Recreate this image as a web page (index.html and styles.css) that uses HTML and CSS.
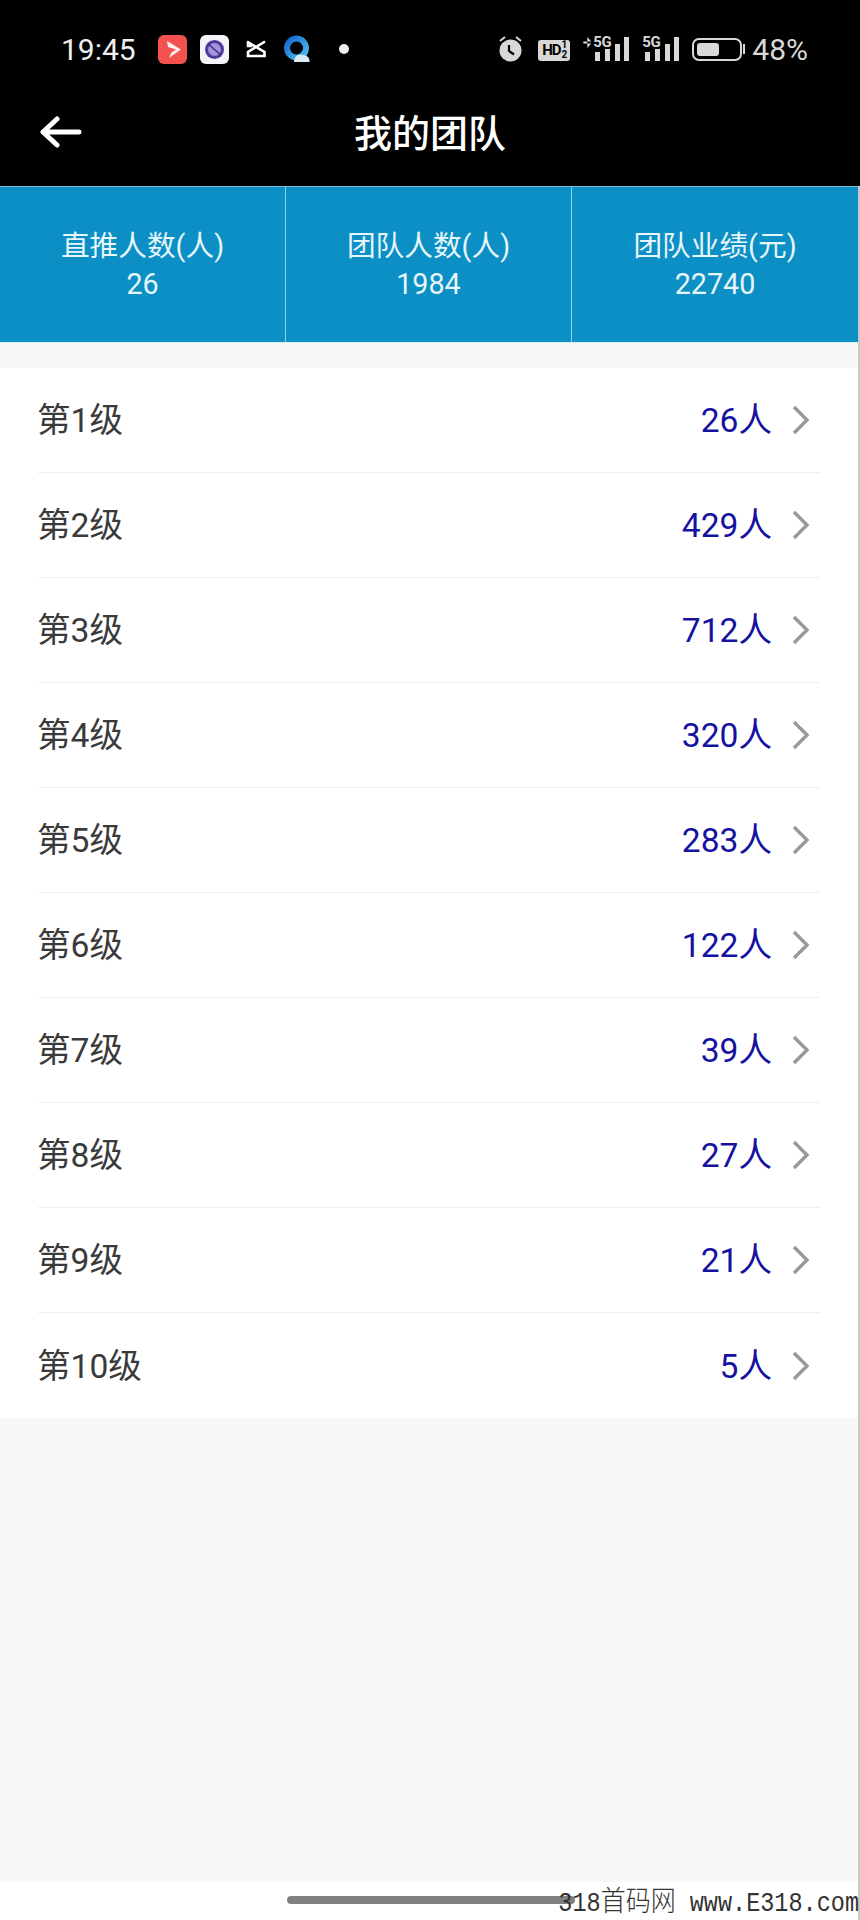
FILE: index.html
```html
<!DOCTYPE html>
<html lang="zh">

<head>
    <meta charset="UTF-8">
    <meta name="viewport" content="width=device-width, initial-scale=1.0">
    <title>我的团队</title>
    <link rel="stylesheet" href="styles.css">
</head>

<body>

    <div class="page">
        <header class="top">
            <div class="status-bar">
                <span class="time">19:45</span>
                <div class="app-icons">
                    <svg width="29" height="29" viewBox="0 0 29 29">
                        <rect width="29" height="29" rx="6" fill="#f4524f" />
                        <path d="M9 6 L23 14.5 L11 23 L13.5 17.5 L18 14.5 L10 12 Z" fill="#fff" opacity="0.9" />
                    </svg>
                    <svg width="29" height="29" viewBox="0 0 29 29">
                        <rect width="29" height="29" rx="6" fill="#f4f3f8" />
                        <circle cx="14.5" cy="14.5" r="9.5" fill="#4b3a9a" />
                        <circle cx="14.5" cy="14.5" r="6.5" fill="#a493dc" />
                        <path d="M8 9 L21 20" stroke="#3d2f86" stroke-width="1.6" />
                    </svg>
                    <svg class="app-capcut" width="20" height="18" viewBox="0 0 20 18">
                        <path d="M1 1.5 L18.5 12 V16 H2 V12 L19 1.5 M2 1.5 V6 L6 6" fill="none" stroke="#fff" stroke-width="2.6" />
                    </svg>
                    <svg class="app-cloud" width="26" height="28" viewBox="0 0 26 28">
                        <defs>
                            <linearGradient id="ringBlue" x1="0" y1="0" x2="1" y2="1">
                                <stop offset="0" stop-color="#1668d0" />
                                <stop offset="1" stop-color="#4cc0ee" />
                            </linearGradient>
                        </defs>
                        <circle cx="12.5" cy="13" r="9.5" fill="none" stroke="url(#ringBlue)" stroke-width="6" />
                        <path d="M10 27 C10 21 15 18 19 20 C23 20 26 23 25.5 27 Z" fill="#dcebf4" />
                    </svg>
                    <span class="dot"></span>
                </div>
                <div class="sys-icons">
                    <svg width="25" height="26" viewBox="0 0 25 26">
                        <path d="M2 5 L7 1 M23 5 L18 1" stroke="#d8d8d8" stroke-width="2" fill="none" />
                        <circle cx="12.5" cy="14.5" r="11" fill="#d8d8d8" />
                        <path d="M11 9 V15 L16 18.5" stroke="#000" stroke-width="2.2" fill="none" />
                    </svg>
                    <span class="hd">HD<span class="hd-sub"><i>1</i><i>2</i></span></span>
                    <div class="signal signal-first">
                        <span class="updown"></span>
                        <span class="net">5G</span>
                        <svg width="34" height="24" viewBox="0 0 34 24">
                            <path d="M0 15 H5 V24 H0 Z M10 12 H15 V24 H10 Z M20 7 H25 V24 H20 Z M29 0 H34 V24 H29 Z" fill="#d8d8d8" />
                        </svg>
                    </div>
                    <div class="signal">
                        <span class="net">5G</span>
                        <svg width="34" height="24" viewBox="0 0 34 24">
                            <path d="M0 15 H5 V24 H0 Z M10 12 H15 V24 H10 Z M20 7 H25 V24 H20 Z M29 0 H34 V24 H29 Z" fill="#d8d8d8" />
                        </svg>
                    </div>
                    <div class="battery">
                        <div class="battery-body"><div class="battery-level"></div></div>
                        <div class="battery-cap"></div>
                    </div>
                    <span class="percent">48%</span>
                </div>
            </div>
            <div class="nav-bar">
                <svg class="back" width="42" height="32" viewBox="0 0 42 32">
                    <path d="M3 16 H39 M17 3 L3 16 L17 29" fill="none" stroke="#fff" stroke-width="5" stroke-linecap="round" stroke-linejoin="round" />
                </svg>
                <h1>我的团队</h1>
            </div>
        </header>

        <main class="content">
            <section class="stats">
                <div class="stat">
                    <span>直推人数(人)</span>
                    <span>26</span>
                </div>
                <div class="stat">
                    <span>团队人数(人)</span>
                    <span>1984</span>
                </div>
                <div class="stat">
                    <span>团队业绩(元)</span>
                    <span>22740</span>
                </div>
            </section>

            <ul class="levels" id="levels"></ul>

            <div class="spacer"></div>

            <div class="home-bar">
                <div class="home-pill"></div>
            </div>
        </main>

        <div class="watermark">318<span class="watermark-cjk">首码网</span> www.E318.com</div>
    </div>

    <script>
        const counts = [26, 429, 712, 320, 283, 122, 39, 27, 21, 5];
        const list = document.getElementById('levels');

        counts.forEach((count, i) => {
            const li = document.createElement('li');
            li.className = 'level';
            li.innerHTML = '<span class="level-name">第' + (i + 1) + '级</span>' +
                '<span class="level-count">' + count + '人</span>' +
                '<svg class="chevron" width="20" height="32" viewBox="0 0 20 32">' +
                '<path d="M3 3 L16 16 L3 29" fill="none" stroke="#999" stroke-width="3.4" /></svg>';
            list.appendChild(li);
        });
    </script>
</body>

</html>
```

FILE: styles.css
```css
* {
    box-sizing: border-box;
}

body {
    margin: 0;
    font-family: Roboto, "Noto Sans CJK SC", sans-serif;
    background-color: #f8f8f8;
    color: #333;
}

.page {
    position: relative;
    display: flex;
    flex-direction: column;
    width: 860px;
    height: 1920px;
    overflow: hidden;
}

.top {
    height: 186px;
    background-color: #000;
    color: #fff;
}

.status-bar {
    display: flex;
    align-items: center;
    height: 98px;
    padding: 0 52px 0 61px;
}

.time {
    width: 97px;
    font-size: 30px;
    color: #eee;
}

.app-icons {
    display: flex;
    align-items: center;
    gap: 13px;
}

.app-capcut {
    margin-left: 4px;
}

.app-cloud {
    margin-left: 5px;
}

.dot {
    width: 10px;
    height: 10px;
    margin-left: 16px;
    border-radius: 50%;
    background-color: #eee;
}

.sys-icons {
    display: flex;
    align-items: center;
    margin-left: auto;
    gap: 13px;
    color: #d8d8d8;
}

.hd {
    display: flex;
    align-items: center;
    justify-content: center;
    width: 32px;
    height: 21px;
    margin: 2px 0 0 2px;
    border-radius: 3px;
    background-color: #d8d8d8;
    color: #000;
    font-size: 15px;
    font-weight: 700;
    letter-spacing: -1px;
}

.hd-sub {
    display: flex;
    flex-direction: column;
    font-size: 10px;
    line-height: 10px;
    margin-left: 1px;
}

.hd-sub i {
    font-style: normal;
}

.signal {
    position: relative;
    display: flex;
    justify-content: flex-end;
    width: 37px;
    height: 24px;
}

.signal-first {
    width: 46px;
}

.signal .net {
    position: absolute;
    top: -1px;
    left: 0;
    font-size: 15px;
    font-weight: 700;
    letter-spacing: -0.5px;
    line-height: 13px;
}

.signal .updown + .net {
    left: 10px;
}

.signal .updown {
    position: absolute;
    top: 0;
    left: 0;
    width: 8px;
    height: 11px;
    background-color: #d8d8d8;
    clip-path: polygon(50% 0, 100% 42%, 0 42%, 0 58%, 100% 58%, 50% 100%);
}

.battery {
    display: flex;
    align-items: center;
}

.battery-body {
    width: 50px;
    height: 23px;
    padding: 3px;
    border: 2px solid #d8d8d8;
    border-radius: 7px;
}

.battery-level {
    width: 22px;
    height: 100%;
    border-radius: 3px;
    background-color: #d8d8d8;
}

.battery-cap {
    width: 2px;
    height: 10px;
    margin-left: 1px;
    background-color: #d8d8d8;
}

.percent {
    margin-left: -6px;
    font-size: 30px;
}

.nav-bar {
    display: grid;
    grid-template-columns: 1fr auto 1fr;
    align-items: center;
    height: 88px;
    padding-bottom: 24px;
}

.nav-bar h1 {
    margin: 0;
    font-size: 38px;
    font-weight: 500;
    color: #fff;
}

.back {
    margin: 4px 0 0 40px;
}

.content {
    display: flex;
    flex-direction: column;
    flex: 1;
    border-right: 2px solid #c9c9c9;
}

.stats {
    display: flex;
    height: 157px;
    background-color: #0b8fc4;
    border-top: 1px solid #7cbcd6;
    border-bottom: 1px solid #d8f0fa;
    color: #e6f6fb;
}

.stat {
    display: flex;
    flex-direction: column;
    align-items: center;
    width: 286px;
    padding-top: 40px;
    border-right: 1px solid #93d0e8;
    font-size: 28.7px;
    line-height: 38px;
}

.stat:last-child {
    width: auto;
    flex: 1;
    border-right: none;
}

.levels {
    margin: 25px 0 0;
    padding: 0;
    list-style: none;
    background-color: #fff;
}

.level {
    display: flex;
    align-items: center;
    height: 105px;
    margin: 0 38px;
    border-bottom: 1px solid #eee;
    font-size: 33.6px;
}

.level:last-child {
    border-bottom: none;
}

.level-name {
    margin-left: -1px;
    padding-bottom: 5px;
    color: #3a3a3a;
}

.level-count {
    margin-left: auto;
    margin-right: 19px;
    padding-bottom: 5px;
    color: #15129f;
}

.chevron {
    margin-right: 9px;
}

.spacer {
    flex: 1;
}

.home-bar {
    display: flex;
    height: 38px;
    background-color: #fff;
    padding: 14px 0 0 287px;
}

.home-pill {
    width: 288px;
    height: 8px;
    border-radius: 4px;
    background-color: #808080;
}

.watermark {
    position: absolute;
    right: 1px;
    bottom: 0;
    font-family: "Liberation Mono", "Noto Sans CJK SC", monospace;
    font-size: 23.5px;
    line-height: 28px;
    white-space: nowrap;
    color: #333;
    transform: scaleY(1.15);
    transform-origin: right bottom;
}

.watermark-cjk {
    font-size: 25px;
    font-weight: 300;
}
```
